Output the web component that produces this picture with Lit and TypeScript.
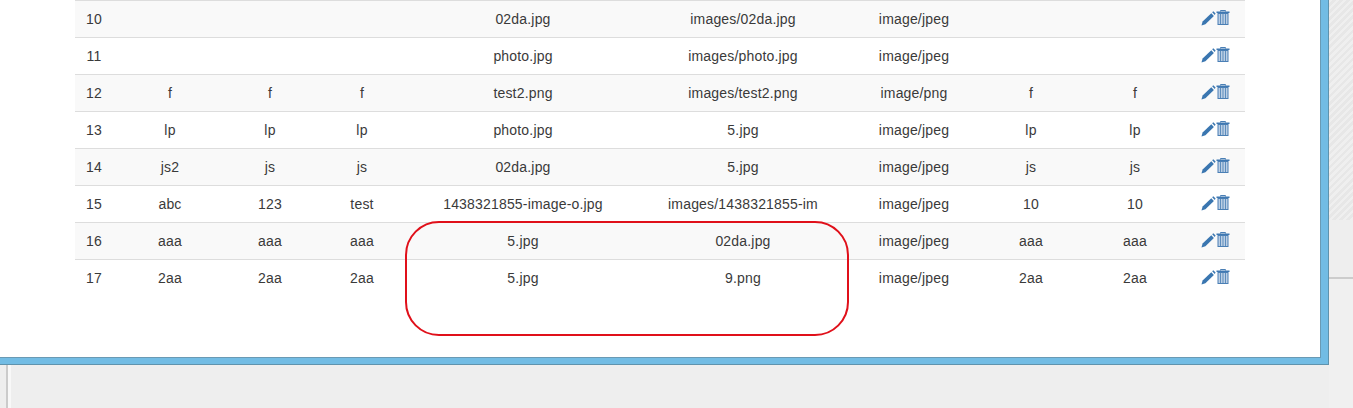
import { LitElement, html, css, svg } from "lit";
import { customElement } from "lit/decorators.js";

const rows: string[][] = [
  ["10", "", "", "", "02da.jpg", "images/02da.jpg", "image/jpeg", "", ""],
  ["11", "", "", "", "photo.jpg", "images/photo.jpg", "image/jpeg", "", ""],
  ["12", "f", "f", "f", "test2.png", "images/test2.png", "image/png", "f", "f"],
  ["13", "lp", "lp", "lp", "photo.jpg", "5.jpg", "image/jpeg", "lp", "lp"],
  ["14", "js2", "js", "js", "02da.jpg", "5.jpg", "image/jpeg", "js", "js"],
  ["15", "abc", "123", "test", "1438321855-image-o.jpg", "images/1438321855-im", "image/jpeg", "10", "10"],
  ["16", "aaa", "aaa", "aaa", "5.jpg", "02da.jpg", "image/jpeg", "aaa", "aaa"],
  ["17", "2aa", "2aa", "2aa", "5.jpg", "9.png", "image/jpeg", "2aa", "2aa"],
];

const pencil = svg`<svg class="ic pen" width="15" height="15" viewBox="0 0 15 15"><path d="M0.5 14.5 L1.6 10.4 L10.3 2.2 L12.9 4.9 L4.4 13.3 Z" fill="#3a76b0"/><path d="M11.2 1.3 L12.3 0.3 L14.6 2.6 L13.7 3.9 Z" fill="#3a76b0"/></svg>`;
const trash = svg`<svg class="ic" width="14" height="16" viewBox="0 0 14 16"><path d="M4.5 1.5 V0.5 H9.5 V1.5" fill="none" stroke="#4a7fb5" stroke-width="1"/><rect x="0.5" y="1.5" width="13" height="1.5" fill="#3f78b2"/><rect x="2" y="3.5" width="10" height="11" fill="#bccfe4" stroke="#4a7fb5" stroke-width="1"/><path d="M4.5 4 V14 M7 4 V14 M9.5 4 V14" stroke="#5d8dbd" stroke-width="1"/></svg>`;

@customElement("app-root")
export class AppRoot extends LitElement {
  static styles = css`
    :host { display: block; position: relative; width: 1353px; height: 408px; overflow: hidden; background: #eeeeee; font-family: "Liberation Sans", Arial, sans-serif; font-size: 14px; letter-spacing: 0.18px; color: #3a3a3a; }
    .page { display: flex; height: 408px; }
    .main { width: 1329px; display: flex; flex-direction: column; }
    .frame { height: 365px; box-sizing: border-box; background: #72bce4; border-right: 1px solid #5f93ad; border-bottom: 1px solid #5f93ad; padding: 0 7px 6px 0; flex: none; }
    .panel { height: 100%; box-sizing: border-box; background: #fff; border-right: 1px solid #6a9ab4; border-bottom: 1px solid #6a9ab4; padding-left: 75px; }
    table { border-collapse: collapse; table-layout: fixed; width: 1170px; }
    td { height: 36px; padding: 0; border-top: 1px solid #ddd; text-align: center; vertical-align: middle; line-height: 36px; white-space: nowrap; overflow: hidden; }
    tr:nth-child(odd) td { background: #f9f9f9; }
    .acts { display: flex; justify-content: center; align-items: flex-start; height: 36px; padding: 9px 0 0 1px; box-sizing: border-box; }
    .ic { display: block; flex: none; }
    .pen { margin-top: 1px; }
    .below { flex: 1; display: flex; }
    .rule { width: 2px; margin-left: 6px; background: #cbcbcb; }
    .light { width: 3px; background: #f8f8f8; }
    .side { flex: 1; display: flex; flex-direction: column; }
    .hatch { height: 220px; background: repeating-linear-gradient(135deg, #efefef 0 2.5px, #e7e7e7 2.5px 5px); }
    .gap { height: 57px; }
    .line { height: 2px; background: #cccccc; }
    .rest { flex: 1; background: #f0f0f0; }
    .note { position: absolute; left: 405px; top: 221px; width: 444px; height: 115px; box-sizing: border-box; border: 2px solid #e0101a; border-radius: 34px; }
  `;

  render() {
    const widths = [38, 114, 86, 98, 224, 216, 126, 108, 100, 60];
    return html`
      <div class="page">
        <div class="main">
          <div class="frame">
            <div class="panel">
              <table>
                <colgroup>${widths.map((w) => html`<col style="width:${w}px" />`)}</colgroup>
                <tbody>
                  ${rows.map(
                    (r) => html`<tr>
                      ${r.map((c) => html`<td>${c}</td>`)}
                      <td><div class="acts">${pencil}${trash}</div></td>
                    </tr>`
                  )}
                </tbody>
              </table>
            </div>
          </div>
          <div class="below"><div class="rule"></div><div class="light"></div></div>
        </div>
        <div class="side">
          <div class="hatch"></div>
          <div class="gap"></div>
          <div class="line"></div>
          <div class="rest"></div>
        </div>
      </div>
      <div class="note"></div>
    `;
  }
}
